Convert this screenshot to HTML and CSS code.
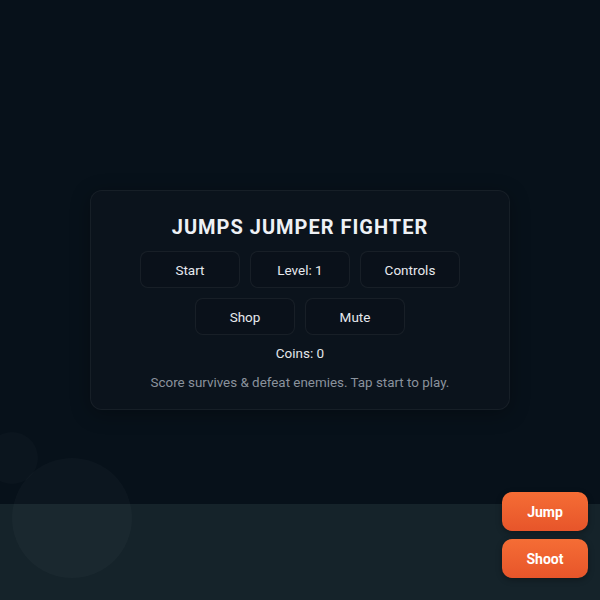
FILE: index.html
```html
<!DOCTYPE html>
<html>
<head>
<meta charset="utf-8">
<link rel="stylesheet" href="styles.css">
</head>
<body>
<div class="stage">
  <div class="ground"></div>
  <div class="bubble bubble-big"></div>
  <div class="bubble bubble-small"></div>
  <main class="menu-wrap">
    <section class="card">
      <h1 class="title">JUMPS JUMPER FIGHTER</h1>
      <div class="row">
        <button class="btn">Start</button>
        <button class="btn">Level: 1</button>
        <button class="btn">Controls</button>
      </div>
      <div class="row">
        <button class="btn">Shop</button>
        <button class="btn">Mute</button>
      </div>
      <p class="coins">Coins: 0</p>
      <p class="desc">Score survives &amp; defeat enemies. Tap start to play.</p>
    </section>
  </main>
  <div class="controls">
    <button class="action">Jump</button>
    <button class="action">Shoot</button>
  </div>
</div>
</body>
</html>
```
FILE: styles.css
```css
* { box-sizing: border-box; }
html, body { margin: 0; padding: 0; }
body {
  background: #07111a;
  font-family: Roboto, "Liberation Sans", sans-serif;
  color: #e6e9ee;
}
.stage {
  position: relative;
  width: 600px;
  height: 600px;
  overflow: hidden;
}
.ground {
  position: absolute;
  left: 0; right: 0; bottom: 0;
  height: 96px;
  background: #15232a;
}
.bubble {
  position: absolute;
  border-radius: 50%;
  background: rgba(255,255,255,0.025);
}
.bubble-big { left: 12px; top: 458px; width: 120px; height: 120px; }
.bubble-small { left: -14px; top: 432px; width: 52px; height: 52px; background: rgba(255,255,255,0.018); }
.menu-wrap {
  position: relative;
  height: 600px;
  display: flex;
  align-items: center;
  justify-content: center;
}
.card {
  width: 420px;
  height: 220px;
  background: #0b131c;
  border: 1px solid rgba(255,255,255,0.05);
  border-radius: 12px;
  padding: 21px 20px 0;
  display: flex;
  flex-direction: column;
  align-items: center;
  box-shadow: 0 4px 20px rgba(0,0,0,0.3);
}
.title {
  margin: 0 0 9px;
  font-size: 20px;
  line-height: 30px;
  font-weight: 700;
  letter-spacing: 1px;
  color: #eef1f5;
}
.row {
  display: flex;
  gap: 10px;
  margin-bottom: 10px;
}
.btn {
  width: 100px;
  height: 37px;
  background: #0a111a;
  border: 1px solid rgba(255,255,255,0.06);
  border-radius: 8px;
  color: #e6e9ee;
  font-family: inherit;
  font-size: 13.5px;
  padding: 0;
}
.coins {
  margin: -2px 0 0;
  font-size: 13.5px;
  line-height: 20px;
  color: #e2e6ea;
}
.desc {
  margin: 10px 0 0;
  font-size: 13.4px;
  line-height: 20px;
  color: #8a929c;
}
.controls {
  position: absolute;
  right: 12px;
  bottom: 22px;
  display: flex;
  flex-direction: column;
  gap: 8px;
}
.action {
  width: 86px;
  height: 39px;
  border: none;
  border-radius: 10px;
  background: linear-gradient(180deg, #f56d35, #e7552a);
  color: #fff;
  font-family: inherit;
  font-weight: 700;
  font-size: 14px;
  box-shadow: 0 2px 6px rgba(0,0,0,0.3);
}
```
